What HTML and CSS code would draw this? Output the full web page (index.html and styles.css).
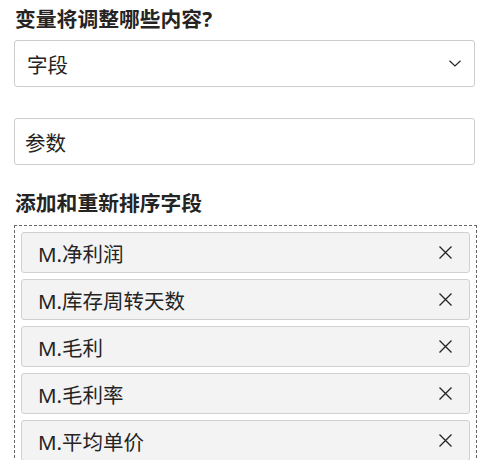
FILE: index.html
```html
<!DOCTYPE html>
<html lang="zh">
<head>
<meta charset="utf-8">
<link rel="stylesheet" href="styles.css">
</head>
<body>
<div class="pane">
  <div class="heading">变量将调整哪些内容?</div>
  <div class="select">
    <span>字段</span>
    <svg class="chev" width="12" height="7" viewBox="0 0 12 7"><path d="M0.5 0.8 L6 6 L11.5 0.8" fill="none" stroke="#252423" stroke-width="1.2"/></svg>
  </div>
  <div class="input">参数</div>
  <div class="heading heading2">添加和重新排序字段</div>
  <div class="drop">
    <div class="item"><span>M.净利润</span><svg class="x" width="13" height="13" viewBox="0 0 13 13"><path d="M0.5 0.5 L12.5 12.5 M12.5 0.5 L0.5 12.5" stroke="#252423" stroke-width="1.3"/></svg></div>
    <div class="item"><span>M.库存周转天数</span><svg class="x" width="13" height="13" viewBox="0 0 13 13"><path d="M0.5 0.5 L12.5 12.5 M12.5 0.5 L0.5 12.5" stroke="#252423" stroke-width="1.3"/></svg></div>
    <div class="item"><span>M.毛利</span><svg class="x" width="13" height="13" viewBox="0 0 13 13"><path d="M0.5 0.5 L12.5 12.5 M12.5 0.5 L0.5 12.5" stroke="#252423" stroke-width="1.3"/></svg></div>
    <div class="item"><span>M.毛利率</span><svg class="x" width="13" height="13" viewBox="0 0 13 13"><path d="M0.5 0.5 L12.5 12.5 M12.5 0.5 L0.5 12.5" stroke="#252423" stroke-width="1.3"/></svg></div>
    <div class="item"><span>M.平均单价</span><svg class="x" width="13" height="13" viewBox="0 0 13 13"><path d="M0.5 0.5 L12.5 12.5 M12.5 0.5 L0.5 12.5" stroke="#252423" stroke-width="1.3"/></svg></div>
  </div>
</div>
</body>
</html>
```
FILE: styles.css
```css
html, body {
  margin: 0;
  padding: 0;
  background: #ffffff;
}
body {
  font-family: "Noto Sans", "Noto Sans CJK SC", sans-serif;
  color: #252423;
  overflow: hidden;
}
.pane {
  padding: 5px 0 0 14px;
  width: 463px;
}
.heading {
  font-size: 20.8px;
  font-weight: 700;
  line-height: 28px;
  padding-left: 1px;
}
.heading2 {
  margin-top: 24px;
}
.select, .input {
  box-sizing: border-box;
  width: 461px;
  height: 47px;
  border: 1px solid #cccccc;
  border-radius: 3px;
  display: flex;
  align-items: center;
  font-size: 20.5px;
  padding-left: 12px;
}
.select {
  margin-top: 7px;
  justify-content: space-between;
  padding-right: 13px;
}
.input {
  margin-top: 31px;
  padding-left: 10px;
}
.drop {
  box-sizing: border-box;
  margin-top: 8px;
  width: 463px;
  border: 1px dashed #666666;
  padding: 6px 6px 6px 6px;
  display: flex;
  flex-direction: column;
  gap: 6px;
}
.item {
  box-sizing: border-box;
  height: 41px;
  background: #f3f3f3;
  border: 1px solid #d0d0d0;
  border-radius: 3px;
  display: flex;
  align-items: center;
  justify-content: space-between;
  padding: 0 17px 0 16px;
  font-size: 20.5px;
}
.x {
  display: block;
}
```
